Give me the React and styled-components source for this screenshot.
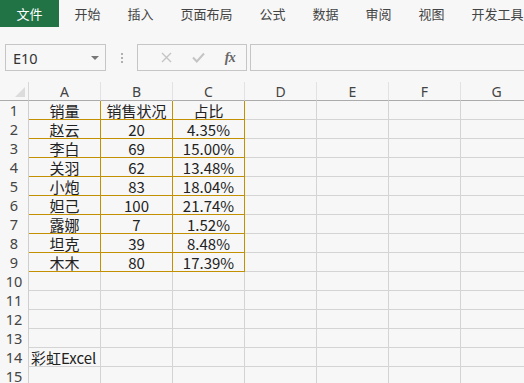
import React from "react";
import styled, { createGlobalStyle } from "styled-components";

const Global = createGlobalStyle`
  html, body { margin: 0; padding: 0; background: #f7f7f7; }
  body { font-family: "Noto Sans CJK SC", "Noto Sans", sans-serif; overflow: hidden; }
`;

const Page = styled.div`
  width: 524px;
  height: 383px;
  overflow: hidden;
  background: #f7f7f7;
  display: flex;
  flex-direction: column;
`;

const TabBar = styled.div`
  display: flex;
  height: 27px;
  align-items: stretch;
  flex-shrink: 0;
  overflow: hidden;
`;

const FileTab = styled.div`
  flex-shrink: 0;
  width: 59px;
  background: #217346;
  color: #fff;
  font-size: 13px;
  display: flex;
  align-items: center;
  justify-content: center;
  margin-right: 2px;
`;

const Tab = styled.div`
  flex-shrink: 0;
  padding: 0 13.5px;
  font-size: 13px;
  color: #444;
  display: flex;
  align-items: center;
  white-space: nowrap;
`;

const FormulaBar = styled.div`
  display: flex;
  align-items: stretch;
  height: 27px;
  margin-top: 17px;
  padding-left: 5px;
  flex-shrink: 0;
`;

const NameBox = styled.div`
  box-sizing: border-box;
  flex-shrink: 0;
  width: 101px;
  border: 1px solid #c6c6c6;
  display: flex;
  align-items: center;
  justify-content: space-between;
  padding: 0 6px 0 7px;
  font-family: "Noto Sans", sans-serif;
  font-size: 14.5px;
  color: #333;
`;

const Caret = styled.span`
  width: 0;
  height: 0;
  border-left: 4px solid transparent;
  border-right: 4px solid transparent;
  border-top: 4px solid #777;
`;

const Dots = styled.div`
  flex-shrink: 0;
  width: 31px;
  display: flex;
  flex-direction: column;
  align-items: center;
  justify-content: center;
  gap: 2px;
`;

const Dot = styled.span`
  width: 2px;
  height: 2px;
  background: #b0b0b0;
`;

const IconBox = styled.div`
  box-sizing: border-box;
  flex-shrink: 0;
  width: 110px;
  border: 1px solid #c6c6c6;
  display: flex;
  align-items: center;
  padding-left: 12px;
`;

const IconSlot = styled.div`
  width: 36px;
  display: flex;
  align-items: center;
  justify-content: center;
`;

const Fx = styled.span`
  font-family: "Liberation Serif", serif;
  font-style: italic;
  font-weight: bold;
  font-size: 14px;
  color: #666;
  letter-spacing: -0.5px;
`;

const FormulaInput = styled.div`
  flex: 1;
  margin-left: 3px;
  border-top: 1px solid #c6c6c6;
  border-bottom: 1px solid #c6c6c6;
  border-left: 1px solid #c6c6c6;
`;

const Grid = styled.div`
  margin-top: 11px;
  display: grid;
  grid-template-columns: 29px repeat(7, 72px);
  grid-auto-rows: 19px;
  width: 533px;
`;

const Corner = styled.div`
  position: relative;
  box-sizing: border-box;
  border-right: 1px solid #d8d8d8;
  border-bottom: 1px solid #ababab;
  &::after {
    content: "";
    position: absolute;
    right: 3px;
    bottom: 3px;
    width: 0;
    height: 0;
    border-left: 10px solid transparent;
    border-bottom: 10px solid #dcdcdc;
  }
`;

const ColHead = styled.div`
  box-sizing: border-box;
  border-right: 1px solid #e2e2e2;
  border-bottom: 1px solid #ababab;
  display: flex;
  align-items: center;
  justify-content: center;
  font-family: "Noto Sans", sans-serif;
  font-size: 14px;
  color: #444;
  line-height: 1;
  padding-top: 2px;
`;

const RowHead = styled.div`
  box-sizing: border-box;
  border-right: 1px solid #cfcfcf;
  display: flex;
  align-items: center;
  justify-content: center;
  font-family: "Noto Sans", sans-serif;
  font-size: 14.5px;
  color: #444;
  line-height: 1;
`;

const Cell = styled.div`
  box-sizing: border-box;
  border-right: 1px solid ${(p) => (p.$gold ? "#c29000" : "#d4d4d4")};
  border-bottom: 1px solid ${(p) => (p.$gold ? "#c29000" : "#d4d4d4")};
  display: flex;
  align-items: center;
  justify-content: ${(p) => (p.$left ? "flex-start" : "center")};
  padding-left: ${(p) => (p.$left ? "2px" : "0")};
  font-size: 15px;
  color: #222;
  line-height: 1;
  white-space: nowrap;
  overflow: visible;
  position: relative;
  z-index: ${(p) => (p.$left ? 1 : 0)};
`;

const tabs = ["开始", "插入", "页面布局", "公式", "数据", "审阅", "视图", "开发工具"];
const cols = ["A", "B", "C", "D", "E", "F", "G"];
const data = [
  ["销量", "销售状况", "占比"],
  ["赵云", "20", "4.35%"],
  ["李白", "69", "15.00%"],
  ["关羽", "62", "13.48%"],
  ["小炮", "83", "18.04%"],
  ["妲己", "100", "21.74%"],
  ["露娜", "7", "1.52%"],
  ["坦克", "39", "8.48%"],
  ["木木", "80", "17.39%"],
];

export default function App() {
  const rows = [];
  for (let r = 1; r <= 15; r++) {
    rows.push(<RowHead key={`h${r}`}>{r}</RowHead>);
    for (let c = 0; c < 7; c++) {
      const inData = r <= 9 && c < 3;
      let text = inData ? data[r - 1][c] : "";
      let left = false;
      if (r === 14 && c === 0) {
        text = "彩虹Excel";
        left = true;
      }
      rows.push(
        <Cell key={`${r}-${c}`} $gold={inData} $left={left}>
          {text}
        </Cell>
      );
    }
  }
  return (
    <Page>
      <Global />
      <TabBar>
        <FileTab>文件</FileTab>
        {tabs.map((t) => (
          <Tab key={t}>{t}</Tab>
        ))}
      </TabBar>
      <FormulaBar>
        <NameBox>
          <span>E10</span>
          <Caret />
        </NameBox>
        <Dots>
          <Dot />
          <Dot />
          <Dot />
        </Dots>
        <IconBox>
          <IconSlot>
            <svg width="11" height="11" viewBox="0 0 11 11">
              <path d="M1 1 L10 10 M10 1 L1 10" stroke="#c4c4c4" strokeWidth="1.4" fill="none" />
            </svg>
          </IconSlot>
          <IconSlot>
            <svg width="13" height="11" viewBox="0 0 13 11">
              <path d="M1 5.5 L4.8 9.5 L12 1.5" stroke="#c4c4c4" strokeWidth="2" fill="none" />
            </svg>
          </IconSlot>
          <IconSlot>
            <Fx>fx</Fx>
          </IconSlot>
        </IconBox>
        <FormulaInput />
      </FormulaBar>
      <Grid>
        <Corner />
        {cols.map((c) => (
          <ColHead key={c}>{c}</ColHead>
        ))}
        {rows}
      </Grid>
    </Page>
  );
}
